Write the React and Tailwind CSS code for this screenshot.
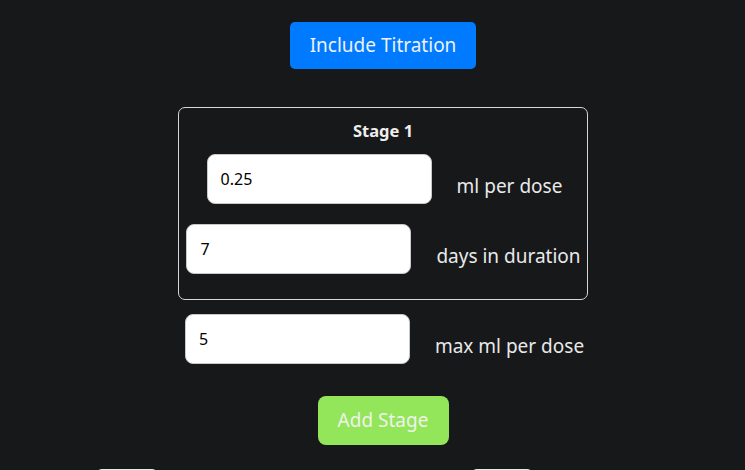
import { useState } from 'react';

const font = { fontFamily: '"Noto Sans", "Open Sans", sans-serif' };

function FieldRow({ value, label, onChange }) {
  return (
    <div className="flex items-start justify-center gap-[25px]">
      <input
        type="text"
        value={value}
        onChange={onChange}
        className="h-[50px] w-[225px] rounded-lg border border-[#c8c8c8] bg-white px-[13px] text-[16px] text-black outline-none"
      />
      <span className="mt-[19px] text-[19px] leading-[26px] text-[#e9e9ea]">{label}</span>
    </div>
  );
}

export default function App() {
  const [dose, setDose] = useState('0.25');
  const [days, setDays] = useState('7');
  const [max, setMax] = useState('5');

  return (
    <div className="h-screen overflow-hidden bg-[#17181a]" style={font}>
      <div className="flex flex-col items-center pl-[21px] pt-[22px]">
        <button className="h-[47px] w-[186px] rounded-[5px] bg-[#007bff] text-[19px] text-[#eef1f8]">
          Include Titration
        </button>

        {/* Stage box */}
        <div className="mt-[38px] flex h-[193px] w-[410px] flex-col items-center rounded-[7px] border border-[#d6d6d6] pt-[12px]">
          <div className="text-[16.5px] font-bold leading-[22px] text-[#eeeeee]">Stage 1</div>
          <div className="mt-[12px] ml-[3px]">
            <FieldRow value={dose} onChange={(e) => setDose(e.target.value)} label="ml per dose" />
          </div>
          <div className="mt-[20px] ml-[1px]">
            <FieldRow value={days} onChange={(e) => setDays(e.target.value)} label="days in duration" />
          </div>
        </div>

        <div className="mt-[14px] ml-[3px]">
          <FieldRow value={max} onChange={(e) => setMax(e.target.value)} label="max ml per dose" />
        </div>

        <button className="mt-[32px] h-[49px] w-[131px] rounded-lg bg-[#93e55a] text-[19px] text-[#eef3ea]">
          Add Stage
        </button>
      </div>

      <div className="mt-[24px] flex gap-[313px] pl-[96px]">
        <div className="h-[40px] w-[62px] rounded-md bg-[#e8e8e8]" />
        <div className="h-[40px] w-[62px] rounded-md bg-[#e8e8e8]" />
      </div>
    </div>
  );
}
